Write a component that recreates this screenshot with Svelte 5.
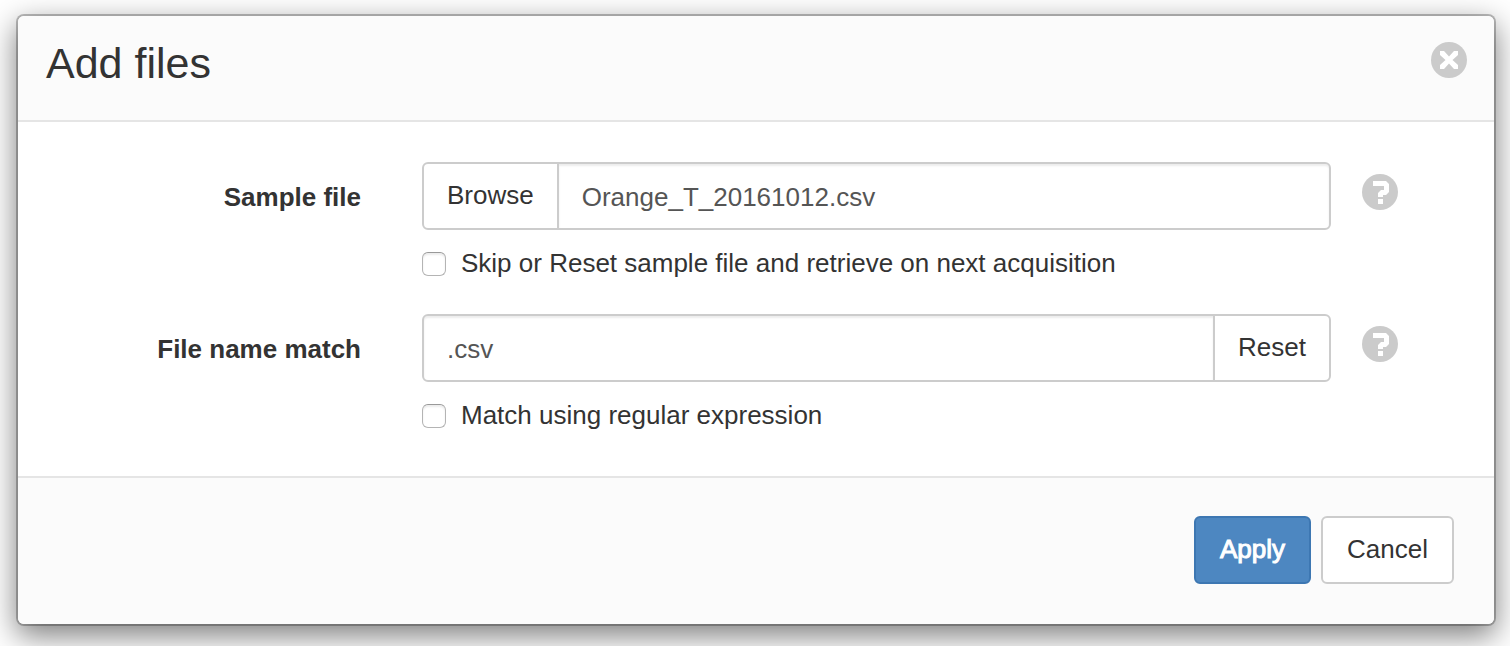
<script>
  let skipSample = $state(false);
  let useRegex = $state(false);
  let fileName = $state('Orange_T_20161012.csv');
  let pattern = $state('.csv');
</script>

{#snippet help(about)}
  <button class="icon" type="button" aria-label={about}>
    <svg viewBox="0 0 36 36" aria-hidden="true">
      <circle cx="18" cy="18" r="18" fill="#cbcbcb" />
      <path d="M11 7h13l3 3v8l-3 3h-3v2h-5v-4l3-3h3v-4H11z" fill="#fff" />
      <path d="M16 25h5v5h-5z" fill="#fff" />
    </svg>
  </button>
{/snippet}

<div class="dialog" role="dialog" aria-labelledby="title">
  <header>
    <h1 id="title">Add files</h1>
    <button class="icon" type="button" aria-label="Close">
      <svg viewBox="0 0 36 36" aria-hidden="true">
        <circle cx="18" cy="18" r="18" fill="#cbcbcb" />
        <path d="M9 9h4l5 5.5L23 9h4v4l-5.5 5L27 23v4h-4l-5-5.5L13 27H9v-4l5.500-5L9 13z" fill="#fff" />
      </svg>
    </button>
  </header>

  <form id="files" onsubmit={(e) => e.preventDefault()}>
    <div class="row">
      <label class="name" for="sample">Sample file</label>
      <div class="field">
        <div class="group">
          <button class="btn" type="button">Browse</button>
          <input id="sample" type="text" bind:value={fileName} />
        </div>
        <label class="check">
          <input type="checkbox" bind:checked={skipSample} />
          <span>Skip or Reset sample file and retrieve on next acquisition</span>
        </label>
      </div>
      {@render help('Sample file help')}
    </div>

    <div class="row">
      <label class="name" for="match">File name match</label>
      <div class="field">
        <div class="group">
          <input id="match" type="text" bind:value={pattern} />
          <button class="btn" type="button" onclick={() => (pattern = '.csv')}>Reset</button>
        </div>
        <label class="check">
          <input type="checkbox" bind:checked={useRegex} />
          <span>Match using regular expression</span>
        </label>
      </div>
      {@render help('File name match help')}
    </div>
  </form>

  <footer>
    <button class="btn primary" type="submit" form="files">Apply</button>
    <button class="btn" type="button">Cancel</button>
  </footer>
</div>

<style>
  :global(body) {
    background: #fff;
  }

  .dialog {
    margin: 16px 16px 22px 18px;
    border-radius: 6px;
    background: #fff;
    /* The outline is translucent so that the drop shadow tints it. */
    box-shadow:
      0 0 0 2px rgba(0, 0, 0, 0.25),
      0 10px 30px 2px rgba(0, 0, 0, 0.5);
    color: #333;
    font: 26px/36px "Liberation Sans", Arial, sans-serif;
  }

  header {
    display: flex;
    justify-content: space-between;
    align-items: flex-start;
    padding: 26px 27px 34px 28px;
    border-bottom: 2px solid #e5e5e5;
    border-radius: 6px 6px 0 0;
    background: #fbfbfb;
  }

  h1 {
    margin: 0;
    font-size: 43px;
    font-weight: 400;
    line-height: 43px;
    padding-bottom: 1px;
  }

  .icon {
    flex: none;
    width: 36px;
    height: 36px;
    padding: 0;
    border: 0;
    background: none;
    cursor: pointer;
  }

  .icon svg {
    display: block;
  }

  form {
    display: grid;
    gap: 32px;
    padding: 40px 96px 42px 28px;
  }

  .row {
    display: grid;
    grid-template-columns: minmax(0, 315px) minmax(0, 1fr) 36px;
  }

  .row .icon {
    margin-top: 12px;
  }

  .name {
    padding-top: 17px;
    text-align: right;
    font-weight: 700;
  }

  .field {
    padding: 0 31px 0 61px;
  }

  .group {
    display: flex;
  }

  .btn,
  .group input {
    box-sizing: border-box;
    height: 68px;
    padding: 0 24px;
    border: 2px solid #ccc;
    border-radius: 6px;
    background: #fff;
    color: #333;
    font: inherit;
  }

  .btn {
    padding-bottom: 2px;
    cursor: pointer;
  }

  .group input {
    flex: 1;
    min-width: 0;
    padding: 2px 23px 0;
    color: #555;
    box-shadow: inset 0 2px 2px rgba(0, 0, 0, 0.075);
  }

  .group .btn {
    padding-left: 23px;
    padding-right: 23px;
  }

  .group > :first-child {
    border-top-right-radius: 0;
    border-bottom-right-radius: 0;
  }

  .group > :last-child {
    margin-left: -2px;
    border-top-left-radius: 0;
    border-bottom-left-radius: 0;
  }

  .check {
    display: flex;
    align-items: center;
    gap: 15px;
    margin-top: 16px;
  }

  .check span {
    padding-bottom: 2px;
    line-height: 34px;
  }

  .check input {
    appearance: none;
    flex: none;
    width: 24px;
    height: 24px;
    margin: 0;
    border: 1px solid #b4b4b4;
    border-top-color: #999;
    border-radius: 6px;
    background: #fff;
    box-shadow: inset 0 2px 2px rgba(0, 0, 0, 0.08);
  }

  .check input:checked {
    background: #4d87c1;
  }

  footer {
    display: flex;
    justify-content: flex-end;
    gap: 10px;
    padding: 38px 40px 40px;
    border-top: 2px solid #e5e5e5;
    border-radius: 0 0 6px 6px;
    background: #fbfbfb;
  }

  .primary {
    border-color: #3d77b2;
    background: #4d87c1;
    color: #fff;
    -webkit-text-stroke: 1px #fff;
  }
</style>
